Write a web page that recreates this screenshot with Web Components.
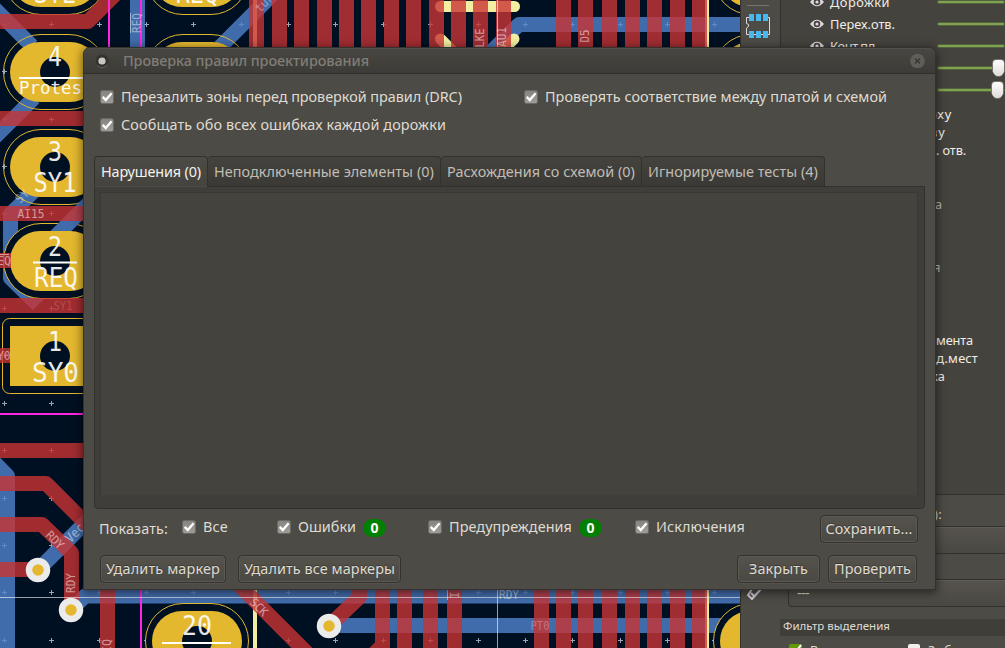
<!DOCTYPE html>
<html lang="ru">
<head>
<meta charset="utf-8">
<title>Проверка правил проектирования</title>
<style>
html,body{margin:0;padding:0;height:648px;overflow:hidden;background:#4d4b45}
body{font-family:"Noto Sans","Open Sans",sans-serif;color:#dfdbd2}
</style>
</head>
<body>
<pcb-editor></pcb-editor>
<script>
const define = (name, html, setup) => {
  const tpl = document.createElement('template');
  tpl.innerHTML = html;
  customElements.define(name, class extends HTMLElement {
    constructor() {
      super();
      this.attachShadow({mode: 'open'}).appendChild(tpl.content.cloneNode(true));
    }
    connectedCallback() { if (setup) setup(this, this.shadowRoot); }
  });
};

/* Text run whose tracking is adjusted to occupy the given width. */
define('ui-text', `<style>
:host{display:block;white-space:pre;line-height:20px;font-size:14.4px;flex:none}
span{display:inline-block}
</style><span><slot></slot></span>`, (el, root) => {
  const w = +el.getAttribute('w');
  if (!w) return;
  el.style.width = w + 'px';
  const s = root.querySelector('span');
  const n = el.textContent.length;
  s.style.letterSpacing = (w - s.getBoundingClientRect().width) / n + 'px';
});

define('ui-check', `<style>
:host{display:flex;align-items:center;gap:7px;height:20px}
svg{flex:none;display:block}
</style>
<svg width="14" height="14" viewBox="0 0 14 14"><defs><linearGradient id="g" x2="0" y2="1"><stop stop-color="#85837f"/><stop offset="1" stop-color="#a09e9b"/></linearGradient></defs>
<rect x=".5" y=".5" width="13" height="13" rx="2" fill="url(#g)" stroke="#6b6964"/><path d="M2.7 6.9 5.8 10 11.6 3.2" fill="none" stroke="#fff" stroke-width="2.3"/></svg><slot></slot>`);

define('ui-badge', `<style>:host{display:block;box-sizing:border-box;width:23px;height:18px;border-radius:9px;background:#008000;color:#fff;font:bold 14px/18px "Noto Sans",sans-serif;text-align:center}</style><slot></slot>`);

define('ui-button', `<style>:host{display:flex;align-items:center;justify-content:center;box-sizing:border-box;height:28px;border:1px solid #35332f;border-radius:4px;background:linear-gradient(#55534c,#4a4842);box-shadow:inset 0 0 0 1px #5b5952,0 1px 0 #55534d;text-shadow:0 -1px 0 #3a3833;flex:none}</style><slot></slot>`);

define('ui-tab', `<style>
:host{display:flex;align-items:center;justify-content:center;box-sizing:border-box;height:31px;border:1px solid #33312d;border-left-width:0;border-radius:4px 4px 0 0;background:linear-gradient(#45433e,#3b3935);color:#c0bdb4}
:host([active]){border-left-width:1px;border-bottom-color:transparent;background:linear-gradient(#4d4b45,#45433e);color:#f4f2ec}
</style><slot></slot>`);

define('drc-dialog', `<style>
:host{display:flex;flex-direction:column;box-sizing:border-box;width:853px;height:543px;border:1px solid #34322e;border-radius:7px 7px 0 0;background:#4d4b45;overflow:hidden;box-shadow:0 2px 10px 1px rgba(0,0,0,.5)}
header{display:flex;align-items:center;box-sizing:border-box;height:26px;padding:0 10px 0 12px;background:linear-gradient(#494742,#3d3b37);border-bottom:1px solid #302e2a;box-shadow:inset 0 1px 0 #514f49;color:#807d76;flex:none}
header ui-text{margin-left:13px;margin-right:auto;font-weight:500}
header svg{flex:none}
.options{display:grid;grid-template-columns:424px auto;grid-auto-rows:20px;align-content:start;row-gap:8px;padding:13px 0 0 16px;height:82px;box-sizing:border-box;flex:none}
.tabs{display:flex;padding-left:10px;height:31px;flex:none;position:relative;z-index:1;margin-bottom:-1px}
.pane{box-sizing:border-box;margin-left:10px;width:831px;height:323px;flex:none;border:1px solid #33312d;border-radius:0 0 4px 4px;background:#403e3a;padding:5px 6px}
.list{box-sizing:border-box;height:304px;width:818px;margin-left:-1px;border:1px solid #3a3834;border-bottom-color:#413f3a;background:#45433e}
.filters{display:grid;grid-template-columns:83px 95px 86px 65px 151px 56px 185px 98px;align-items:start;padding:6px 0 0 15px;height:46px;box-sizing:border-box;flex:none}
.filters>:first-child{margin-top:4px}
.filters ui-check{margin-top:2px}
.filters ui-badge{margin-top:4px}
.actions{display:flex;padding:0 18px 0 16px}
.actions :nth-child(2){margin-left:12px;margin-right:auto}
.actions :nth-child(4){margin-left:8px}
</style>
<header>
<svg width="14" height="14" viewBox="0 0 14 14"><circle cx="6" cy="7" r="6.5" fill="#353330"/><path d="M1 11a6 6 0 0 0 10 0" fill="none" stroke="#66645e"/><circle cx="6" cy="7" r="3.6" fill="#cbc7bf"/></svg>
<ui-text w="246">Проверка правил проектирования</ui-text>
<svg width="15" height="16" viewBox="0 0 15 16"><circle cx="7.5" cy="8" r="7.3" fill="#605e58"/><path d="m5 5.5 5 5m0-5-5 5" stroke="#393733" stroke-width="1.3"/></svg>
</header>
<div class="options">
<ui-check><ui-text w="341">Перезалить зоны перед проверкой правил (DRC)</ui-text></ui-check>
<ui-check><ui-text w="342">Проверять соответствие между платой и схемой</ui-text></ui-check>
<ui-check><ui-text w="325">Сообщать обо всех ошибках каждой дорожки</ui-text></ui-check>
</div>
<div class="tabs">
<ui-tab active style="width:114px"><ui-text w="100">Нарушения (0)</ui-text></ui-tab>
<ui-tab style="width:233px"><ui-text w="220">Неподключенные элементы (0)</ui-text></ui-tab>
<ui-tab style="width:201px"><ui-text w="188">Расхождения со схемой (0)</ui-text></ui-tab>
<ui-tab style="width:183px"><ui-text w="170">Игнорируемые тесты (4)</ui-text></ui-tab>
</div>
<div class="pane"><div class="list"></div></div>
<div class="filters">
<ui-text w="69">Показать:</ui-text>
<ui-check><ui-text w="25">Все</ui-text></ui-check>
<ui-check><ui-text w="58">Ошибки</ui-text></ui-check><ui-badge>0</ui-badge>
<ui-check><ui-text w="123">Предупреждения</ui-text></ui-check><ui-badge>0</ui-badge>
<ui-check><ui-text w="89">Исключения</ui-text></ui-check>
<ui-button><ui-text w="87">Сохранить...</ui-text></ui-button>
</div>
<div class="actions">
<ui-button style="width:126px"><ui-text w="114">Удалить маркер</ui-text></ui-button>
<ui-button style="width:163px"><ui-text w="151">Удалить все маркеры</ui-text></ui-button>
<ui-button style="width:83px"><ui-text w="59">Закрыть</ui-text></ui-button>
<ui-button style="width:89px"><ui-text w="77">Проверить</ui-text></ui-button>
</div>`);

define('pcb-canvas', `<style>
:host{display:block;width:740px;height:648px;overflow:hidden}
svg{display:block;font-family:"DejaVu Sans Mono","Liberation Mono",monospace}
</style>
<svg width="740" height="648" viewBox="0 0 740 648">
<rect width="740" height="648" fill="#001023"/>
<path id="grid" fill="none" stroke="#c6cbd2" stroke-opacity=".8" shape-rendering="crispEdges"/>
<g fill="none" stroke="#5183cd" stroke-width="15" stroke-linejoin="round" opacity=".8">
<path d="M-8 6 32 46M34 98-8 140M137.500 0V50M220 47 275 -8M740 24.500H519L488 55"/>
<path d="M35 190 10.500 214V278L38 305"/>
<path d="M-8 460 7.500 476V648M38 570 90 518M71 610 85 596H740M329 625.500H740"/>
</g>
<g fill="none" stroke="#f2eda1" stroke-linecap="round">
<path d="M440.500 6.500H514.500M440.500 39l15 15M514 39l-16 16" stroke-width="11"/>
<path d="M255 -5V53M255 585V655" stroke-width="4"/><path d="M707 -5V53M707 585V655" stroke-width="4"/>
</g>
<g id="pads"></g>
<g fill="none" stroke="#c83434" stroke-width="15" opacity=".8" stroke-linejoin="round">
<path d="M-5 21.500H88L118 -8.500M-5 118.500H90M-5 213.500H90M-5 305.500H90M-5 450.500H90M-5 260.500H11M-5 355.500H10M-5 483.500H46L90 527.500M-5 524.500H42L71.500 553V610M-5 569.500H38"/>
<path d="M107.500 585V650M232 578 307 653M329 626 359.500 597V580M373 655l8-8"/>
<path id="tracks"/>
</g>
<g stroke="#ebebeb" stroke-width="6.500"><g id="vias"></g></g>
<path d="M0 414H85M109 0V50M141 0V50M141 585V648" stroke="#ff26e2" stroke-width="2" fill="none"/>
<path d="M0 597.500H740M497.500 0V48M497.500 585V648" stroke="#fff" stroke-opacity=".6" fill="none"/>
<g id="labels" fill="#fff"></g>
</svg>`, (el, root) => {
  const $ = id => root.getElementById(id);
  /* centre x, centre y, cleared ring */
  const pads = [[55,-23],[55,72],[55,167],[55,261,1],[197,-23],[197,72],[197,641,1],[765,-23,1],[765,72,1],[765,641,1]];
  let p = pads.map(([x, y, c]) =>
    `<rect x="${x-51.5}" y="${y-37.500}" width="103" height="75" rx="37.500" fill="${c ? '#001023' : 'none'}" stroke="#e3b72e"/>`
    + (y === 261 ? '<path d="M90 202 52 240" stroke="#416cab" stroke-width="15"/>' : '') +
    `<rect x="${x-45}" y="${y-30}" width="90" height="60" rx="30" fill="#e3b72e"/><circle cx="${x}" cy="${y}" r="15" fill="#001023"/>`).join('');
  p += `<rect x="2.500" y="318.500" width="105" height="75" rx="7" fill="none" stroke="#e3b72e"/><rect x="10" y="326" width="90" height="60" fill="#e3b72e"/><circle cx="55" cy="356" r="15" fill="#001023"/>`;
  $('pads').innerHTML = p;
  const top = [256.5,279.5,301.5,324.5,346.5,368.5,391.5,413.5,436.5,458.5,480.5,503.5,563.5,585.5,609.5,632.5,654.5,677.5,699.5];
  const bottom = [382.5,404.5,430.5,454.5,541.5,563.5,585.5,609.5,632.5,654.5,677.5,699.5];
  $('tracks').setAttribute('d', top.map(x => `M${x} -5V53`).join('') + bottom.map(x => `M${x} 585V655`).join(''));
  $('vias').innerHTML = [[38,570],[71,610],[329,626]].map(([x, y]) => `<circle cx="${x}" cy="${y}" r="9" fill="#e3b72e"/>`).join('');
  let g = '';
  for (let i = 0; i < 16; i++) for (let j = 0; j < 14; j++) {
    const x = Math.round(4 + i * 47.35), y = Math.round(24 + j * 47.35);
    g += `M${x-2} ${y+.5}h5M${x+.5} ${y-2}v5`;
  }
  $('grid').setAttribute('d', g);
  /* text, centre x, baseline, size, width, opacity, rotation */
  const labels = [
    ['4',55,66,26,14,.9],['Protes',50.5,94,18,63,.9],['3',55,161,26,14,.9],['SY1',55,192,26,43,.9],
    ['2',55,256,26,14,.9],['REQ',56,286.5,26,44,.9],['1',55,351,26,14,.9],['SY0',55.500,382,26,47,.9],
    ['20',197,635,26,30,.9],['SY2',55,3,26,43,.9],['REQ',197,3,26,43,.9],
    ['AI15',31,218,12,27,.5],['SY1',63,310,12,19,.15],['EQ',4,265,12,14,.5],['Y0',4,360,12,13,.5],
    ['REQ',141,23,12,20,.45,-90],['LKE',484,38,12,19,.5,-90],['AU1',506,37,12,20,.5,-90],['D5',589,36,12,13,.5,-90],
    ['RDY',52,543,12,20,.5,45],['RDY',75,583,12,20,.5,-90],['Vec',78,536,13,21,.5,-45],['SCK',256,610,12,20,.5,45],
    ['RDY',509,599,12,20,.5],['PT0',540,630,12,19,.25],['IQ',111,646,12,14,.5,-90],['I',459,595,12,7,.5,-90],
    ['tur',267,6,12,20,.35,-45],['SY',25,199,12,14,.4,-45]
  ];
  $('labels').innerHTML = labels.map(([t, x, y, s, w, o, r]) =>
    `<text x="${x}" y="${y}" font-size="${s}" text-anchor="middle" textLength="${w}" lengthAdjust="spacingAndGlyphs" opacity="${o}"${r ? ` transform="rotate(${r} ${x} ${y})"` : ''}>${t}</text>`).join('') +
    `<path d="M19 78H85M33 262.500H77M162 643H231" stroke="#fff" stroke-width="2"/><path d="M130.500 13V33M447.500 590V600M0 254.500H9" stroke="#fff" stroke-opacity=".5"/>`;
});

define('side-toolbar', `<style>
:host{display:flex;flex-direction:column;align-items:flex-start;justify-content:space-between;box-sizing:border-box;width:40px;height:648px;padding:5px 0 48px 5px;background:#4d4b45;border-left:1px solid #33312e}
svg{display:block}
</style>
<svg width="26" height="36" viewBox="0 0 26 36"><path d="M1 .5h22" stroke="#77756f"/><path d="M3.500 12.500H.5v6q3 .5 2 2.500t-2 2v6.500h23v-17H21" fill="none" stroke="#ded6de"/><path d="M3 9h5v7H3zm7 0h5v7h-5zm7 0h5v7h-5zM3 26h5v7H3zm7 0h5v7h-5zm7 0h5v7h-5z" fill="#48b9ef"/></svg>
<svg width="16" height="16" viewBox="0 0 16 16"><path d="m6 5-4 6 4 4L15 5M5 9l3 3" fill="none" stroke="#d2c9d4" stroke-width="2"/></svg>`);

define('layer-row', `<style>
:host{display:grid;grid-template-columns:22px 1fr 68px;align-items:center;height:22px;padding-left:27px}
svg{grid-column:1;justify-self:start}
i{grid-column:3;grid-row:1;display:block;height:2px;background:#82a253;border:1px solid #52633c;border-radius:2px;position:relative}
b{display:none;position:absolute;top:-8px;width:11px;height:16px;background:linear-gradient(#fff,#dedcd8);border:1px solid #77746e;border-radius:4px 4px 6px 6px;clip-path:polygon(0 0,100% 0,100% 68%,66% 100%,34% 100%,0 68%)}
:host([thumb]) b{display:block}
</style>
<svg width="18" height="14" viewBox="0 0 18 14"><path d="M2 7q7-8.500 14 0-7 8.500-14 0z" fill="#e2d9e2"/><circle cx="9" cy="7" r="3.300" fill="#45433e"/><circle cx="9" cy="7" r="1.600" fill="#e2d9e2"/></svg>
<slot></slot><i><b></b></i>`, (el, root) => {
  root.querySelector('b').style.left = el.getAttribute('thumb') + 'px';
});

define('appearance-panel', `<style>
:host{display:flex;flex-direction:column;box-sizing:border-box;width:225px;height:648px;background:#4d4b45;overflow:hidden}
.layers{box-sizing:border-box;height:495px;flex:none;background:#45433e;border-left:1px solid #33312e;border-bottom:1px solid #33312e;overflow:hidden}
.rows{margin-top:-9px;height:112px}
.rows ui-text,.objects ui-text{font-size:12.800px;color:#f0ede6}
.objects{display:grid;grid-template-rows:18px 18px 54px 63px 73px 18px 18px;align-items:start;justify-items:start;padding:1px 0 0 148px}
.objects ui-text.dim{color:#b9b6ae}
.preset{height:31px;box-sizing:border-box;padding:10px 0 0 154px;flex:none}
.combo{box-sizing:border-box;height:28px;border:1px solid #33312d;border-right:0;border-radius:4px 0 0 4px;background:linear-gradient(#55534c,#4a4842);box-shadow:inset 0 1px 0 #5f5d56;margin-left:8px;flex:none;padding:3px 8px}
.combo+.combo{margin-top:25px}
h2{margin:12px 0 0;height:17px;background:#403e39;padding-left:3px;flex:none;font-weight:400;display:flex;align-items:center}
h2 ui-text{margin-top:-4px}
.filter{display:grid;grid-template-columns:21px 98px 20px auto;padding-left:9px;margin-top:8px;height:20px;flex:none}
.box{width:12px;height:12px;background:#f1efed;border-radius:2px}
.filter ui-text{margin-top:-3px;font-size:12.500px}
</style>
<div class="layers">
<div class="rows">
<layer-row><ui-text w="60">Дорожки</ui-text></layer-row>
<layer-row><ui-text w="65">Перех.отв.</ui-text></layer-row>
<layer-row><ui-text w="48">Конт.пл.</ui-text></layer-row>
<layer-row thumb="54"></layer-row>
<layer-row thumb="53"></layer-row>
</div>
<div class="objects">
<ui-text w="23">рху</ui-text><ui-text w="16" style="margin-left:1px">ву</ui-text><ui-text w="30" style="margin-left:7px">. отв.</ui-text><ui-text class="dim" w="7" style="margin-left:6px">а</ui-text><ui-text class="dim" w="7" style="margin-left:4px">я</ui-text>
<ui-text w="37" style="margin-left:7px">мента</ui-text><ui-text w="49">ад.мест</ui-text><ui-text w="14" style="margin-left:2px">ка</ui-text>
</div>
</div>
<div class="preset"><ui-text w="8" style="font-size:13px;line-height:18px">):</ui-text></div>
<div class="combo"></div>
<div class="combo"><ui-text w="12">---</ui-text></div>
<h2><ui-text w="107" style="font-size:11.500px">Фильтр выделения</ui-text></h2>
<div class="filter"><svg width="13" height="12" viewBox="0 0 13 12"><rect width="13" height="12" rx="2" fill="#5e9b00"/><path d="m3 6 3 3 6-8" stroke="#fff" stroke-width="2" fill="none"/></svg><ui-text w="88">Все элементы</ui-text><span class="box"></span><ui-text w="70">Заблокир.</ui-text></div>`);

define('pcb-editor', `<style>
:host{display:grid;grid-template-columns:740px 40px 225px;width:1005px;height:648px;overflow:hidden;position:relative}
drc-dialog{position:absolute;left:83px;top:47px}
</style>
<pcb-canvas></pcb-canvas><side-toolbar></side-toolbar><appearance-panel></appearance-panel><drc-dialog></drc-dialog>`);
</script>
</body>
</html>
